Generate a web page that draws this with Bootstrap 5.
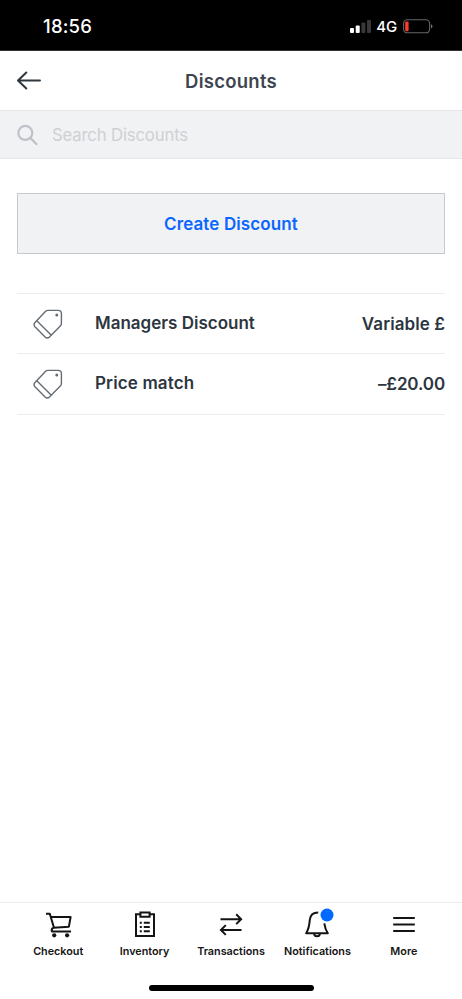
<!DOCTYPE html>
<html lang="en">
<head>
<meta charset="utf-8">
<meta name="viewport" content="width=device-width, initial-scale=1">
<title>Discounts</title>
<link href="https://cdn.jsdelivr.net/npm/bootstrap@5.3.0/dist/css/bootstrap.min.css" rel="stylesheet">
<style>
  body { font-family: Inter, "Liberation Sans", sans-serif; color: #2d3640; background: #fff; }
  svg { display: block; flex: none; }
  .screen { height: 999px; overflow: hidden; }
  .status { height: 51px; background: #000; border-bottom: 1px solid #333; color: #fff; padding: 2px 29px 0 43px; }
  .clock { font-size: 18.5px; font-weight: 500; letter-spacing: .2px; line-height: 24px; }
  .carrier { font-size: 15px; font-weight: 500; line-height: 20px; letter-spacing: -.1px; padding-top: 1px; margin: 0 5px 0 4px; }
  .signal { margin-right: 1px; }
  .title-bar { height: 60px; border-bottom: 1px solid #e4e6e8; padding: 0 17px; }
  .title-bar h1 { font-size: 18.5px; font-weight: 600; line-height: 24px; color: #3d4650; letter-spacing: .25px; }
  .search { height: 48px; background: #f1f2f4; border-bottom: 1px solid #e6e8ea; padding: 0 17px; }
  .search input, .search input:focus { background: transparent; font-size: 16.7px; line-height: 24px; color: #3d4650; letter-spacing: -.15px; }
  .search input { margin-left: 13px; }
  .search input::placeholder { color: #ced0d3; opacity: 1; }
  .content { padding: 34px 17px 0; }
  .create { height: 61px; background: #f1f2f4; border: 1px solid #c6cacf; color: #0a66ff; font-size: 17px; font-weight: 600; letter-spacing: .12px; }
  .create span { padding-top: 2px; }
  .entries { margin-top: 39px; border-top: 1px solid #ebecee; }
  .entry { height: 60px; border-bottom: 1px solid #ebecee; font-size: 17px; font-weight: 600; line-height: 24px; padding-left: 15px; }
  .entry + .entry { height: 61px; }
  .entry-name { margin-left: 31px; padding-bottom: 2px; }
  .entry + .entry .entry-name { letter-spacing: .14px; }
  .entry-value { letter-spacing: .08px; }
  .entry + .entry .entry-value { letter-spacing: -.12px; }
  .tabs { height: 97px; border-top: 1px solid #ededee; padding: 8px 15px 0; color: #141414; }
  .tab-label { font-size: 10.8px; font-weight: 600; line-height: 14px; margin-top: 6px; color: #141414; }
  .tab { flex: 1 1 0; width: 0; white-space: nowrap; }
  .home { width: 165px; height: 5.5px; background: #000; margin-bottom: 8.5px; }
</style>
</head>
<body>
<div class="screen d-flex flex-column">
  <div class="status d-flex align-items-center">
    <span class="clock">18:56</span>
    <div class="d-flex align-items-center ms-auto">
      <svg class="signal" width="21" height="15" viewBox="0 0 21 15"><g fill="#fff"><rect x="0" y="9" width="4" height="5" rx="1"/><rect x="5.7" y="6.5" width="4" height="7.5" rx="1"/></g><g fill="#383838"><rect x="11.4" y="3.5" width="4" height="10.5" rx="1"/><rect x="17" y="1" width="4" height="13" rx="1"/></g></svg>
      <span class="carrier">4G</span>
      <svg width="31" height="15" viewBox="0 0 31 15"><rect x="1.6" y=".8" width="26" height="13" rx="3.6" fill="none" stroke="#666" stroke-width="1.1"/><rect x="3.2" y="2.4" width="3.4" height="9.8" rx="1.2" fill="#ff3b30"/><path d="M29 5.2q1.4.6 1.4 2.1T29 9.4z" fill="#777"/></svg>
    </div>
  </div>
  <header class="title-bar position-relative d-flex align-items-center justify-content-center">
    <a href="#" class="position-absolute start-0 ms-3" aria-label="Back">
      <svg width="26" height="20" viewBox="0 0 26 20" fill="none" stroke="#30383f" stroke-width="2" stroke-linecap="round" stroke-linejoin="round"><path d="M24 9.5H2.5M10.3 1.5 2 9.5l8.3 8"/></svg>
    </a>
    <h1 class="mb-0">Discounts</h1>
  </header>
  <label class="search d-flex align-items-center">
    <svg width="22" height="22" viewBox="0 0 22 22" fill="none" stroke="#bfc2c8" stroke-width="2.2"><circle cx="8.3" cy="8.9" r="7"/><path d="m13.3 13.9 6.8 6.8"/></svg>
    <input class="form-control border-0 shadow-none rounded-0 p-0" type="text" placeholder="Search Discounts">
  </label>
  <main class="content flex-grow-1">
    <button class="btn create rounded-0 w-100 d-flex align-items-center justify-content-center p-0" type="button"><span>Create Discount</span></button>
    <div class="entries">
      <div class="entry d-flex align-items-center">
        <svg width="32" height="32" viewBox="0 0 32 32" fill="none" stroke="#656c74" stroke-width="1.4" stroke-linejoin="round"><path d="M16.1 2.4H26.2q3.2 0 3.2 3.2v9.8q0 1.6-1.1 2.7L17.5 28.9q-2.2 2-4.4 0l-9.9-9.8q-2.3-2.4 0-4.8L13.4 3.5q1.1-1.1 2.7-1.1zM4.8 12.7 19.3 27.2"/><circle cx="24.8" cy="7" r=".8" fill="#656c74"/></svg>
        <span class="entry-name">Managers Discount</span>
        <span class="entry-value ms-auto">Variable £</span>
      </div>
      <div class="entry d-flex align-items-center">
        <svg width="32" height="32" viewBox="0 0 32 32" fill="none" stroke="#656c74" stroke-width="1.4" stroke-linejoin="round"><path d="M16.1 2.4H26.2q3.2 0 3.2 3.2v9.8q0 1.6-1.1 2.7L17.5 28.9q-2.2 2-4.4 0l-9.9-9.8q-2.3-2.4 0-4.8L13.4 3.5q1.1-1.1 2.7-1.1zM4.8 12.7 19.3 27.2"/><circle cx="24.8" cy="7" r=".8" fill="#656c74"/></svg>
        <span class="entry-name">Price match</span>
        <span class="entry-value ms-auto">–£20.00</span>
      </div>
    </div>
  </main>
  <footer class="tabs d-flex flex-column">
    <nav class="d-flex text-center">
      <div class="tab d-flex flex-column align-items-center">
        <svg width="28" height="28" viewBox="0 0 28 28" fill="none" stroke="#141414" stroke-width="2" stroke-linejoin="round"><path d="M2 2.7h3.8L10 16.7M7.4 6h19.2l-1.7 9.7L9.5 16.7q-2.4.7-1.6 3.8H27"/><g fill="#141414" stroke="none"><circle cx="10.2" cy="24.3" r="2.1"/><circle cx="23.1" cy="24.3" r="2.1"/></g></svg>
        <span class="tab-label">Checkout</span>
      </div>
      <div class="tab d-flex flex-column align-items-center">
        <svg width="28" height="28" viewBox="0 0 28 28" fill="none" stroke="#141414" stroke-width="2"><path d="M9.3 3.3H5v21.6h18V3.3h-4.3"/><path d="M9.4 1.4h9.2v4.3H9.4z"/><path d="M12.8 11.7h6M12.8 16h6M12.8 20.3h6M8.8 11.7h2M8.8 16h2M8.8 20.3h2"/></svg>
        <span class="tab-label">Inventory</span>
      </div>
      <div class="tab d-flex flex-column align-items-center">
        <svg width="28" height="28" viewBox="0 0 28 28" fill="none" stroke="#141414" stroke-width="2"><path d="M3.5 8.2H24M19.2 3.3l4.9 4.9-4.9 4.9M24.5 19H4M8.8 14.1 3.9 19l4.9 4.9"/></svg>
        <span class="tab-label">Transactions</span>
      </div>
      <div class="tab d-flex flex-column align-items-center">
        <svg width="28" height="28" viewBox="0 0 28 28" fill="none" stroke="#141414" stroke-width="2" stroke-linejoin="round" overflow="visible"><path d="M15.2 1.5C9.8 1.5 7.2 4.6 6.8 8.9 6.4 14 5.8 18 3.2 22.3H24.8C22.6 19 21.8 15.7 21.3 12.3M11.2 22.7a2.8 2.5 0 0 0 5.6 0"/><circle cx="24" cy="4" r="6.5" fill="#006aff" stroke="none"/></svg>
        <span class="tab-label">Notifications</span>
      </div>
      <div class="tab d-flex flex-column align-items-center">
        <svg width="28" height="28" viewBox="0 0 28 28" fill="none" stroke="#141414" stroke-width="2"><path d="M3.2 7.1h21.6M3.2 13.6h21.6M3.2 20.1h21.6"/></svg>
        <span class="tab-label">More</span>
      </div>
    </nav>
    <div class="home rounded-pill mx-auto mt-auto"></div>
  </footer>
</div>
<script src="https://cdn.jsdelivr.net/npm/bootstrap@5.3.0/dist/js/bootstrap.bundle.min.js"></script>
</body>
</html>
